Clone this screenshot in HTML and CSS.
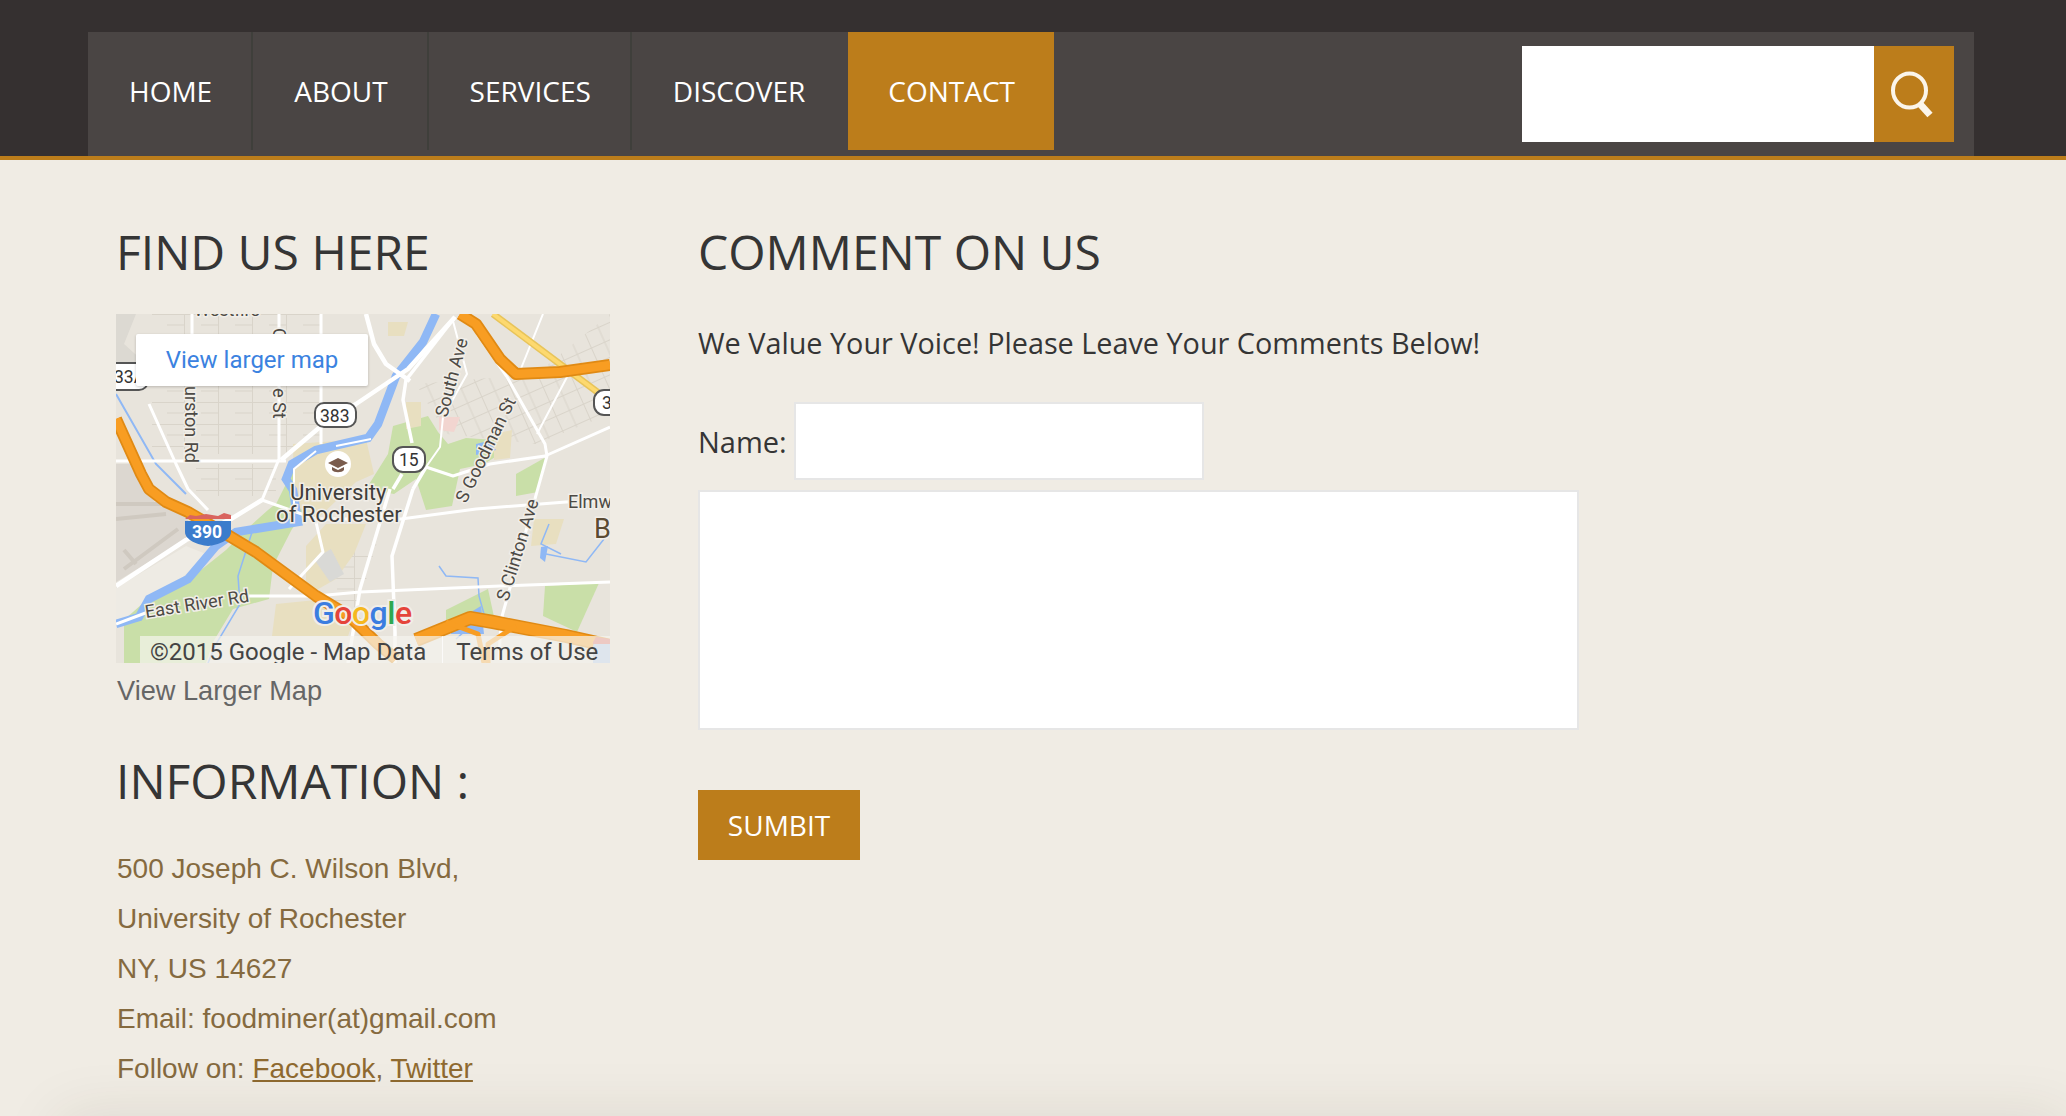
FILE: index.html
```html
<!DOCTYPE html>
<html>
	<head>
		<meta charset="utf-8">
		<title>Contact</title>
		<link rel="stylesheet" href="styles.css">
	</head>
	<body>
		<header id="header">
			<div id="menuBar">
				<nav id="menu">
					<a href="#">HOME</a>
					<a href="#">ABOUT</a>
					<a href="#">SERVICES</a>
					<a href="#">DISCOVER</a>
					<a href="#" class="active">CONTACT</a>
				</nav>
				<form id="search">
					<input type="text" name="q">
					<button type="button" aria-label="Search">
						<svg width="80" height="96" viewBox="0 0 80 96">
							<ellipse cx="35.5" cy="44.5" rx="16.5" ry="17" fill="none" stroke="#fbf5ea" stroke-width="4"/>
							<path d="M46 58 L56 69" stroke="#fbf5ea" stroke-width="7" fill="none"/>
						</svg>
					</button>
				</form>
			</div>
		</header>

		<main id="content">
			<section id="leftCol">
				<h2>FIND US HERE</h2>
				<div id="map">
					<svg width="494" height="349" viewBox="0 0 494 349">
						<defs>
							<pattern id="blocks" width="34" height="22" patternUnits="userSpaceOnUse">
								<path d="M0 .5H34M.5 0V22M17 11H34" stroke="#d9d4ca" stroke-width="1" fill="none"/>
							</pattern>
							<pattern id="blocksTilt" width="30" height="16" patternUnits="userSpaceOnUse" patternTransform="rotate(-24)">
								<path d="M0 .5H30M.5 0V16M15 0V16" stroke="#d9d4ca" stroke-width="1" fill="none"/>
							</pattern>
						</defs>
						<rect width="494" height="349" fill="#e8e4dc"/>

						<!-- blocks -->
						<rect x="36" y="0" width="170" height="140" fill="url(#blocks)"/>
						<rect x="80" y="150" width="80" height="32" fill="url(#blocks)"/>
						<path d="M300 70L420 60L494 0V100L420 130L330 120Z" fill="url(#blocksTilt)"/>
						<path d="M212 225H262L240 300H212Z" fill="url(#blocks)"/>

						<!-- airport -->
						<path d="M0 150H14L40 190L72 204V224L0 268Z" fill="#dcd7d0"/>
						<path d="M0 190H58M0 205L50 200M8 255L62 215M20 250L8 236" stroke="#cfc9c0" stroke-width="4" fill="none"/>
						<path d="M0 274L70 232L90 240L60 270L0 310Z" fill="#eeebe4"/>
						<path d="M0 0L20 0L8 30L28 48L0 52Z" fill="#dcd9d2"/>

						<!-- parks -->
						<path d="M8 349V306L35 282L70 268L110 236L132 214L152 196L182 172L192 196L176 215L157 252L153 285L117 295L97 328L90 349Z" fill="#c9dfa8"/>
						<path d="M180 150L190 170L170 205L150 210L165 180Z" fill="#c9dfa8"/>
						<path d="M277 112L312 102L322 118L332 130L350 124L378 126L384 140L368 150L344 155L336 192L310 196L300 165L278 180L250 175L272 140Z" fill="#c9dfa8"/>
						<path d="M400 160L432 142L422 178L400 182Z" fill="#c9dfa8"/>
						<path d="M429 272L483 269L461 318L427 302Z" fill="#c9dfa8"/>
						<path d="M330 296L372 275L380 312L330 316Z" fill="#c9dfa8"/>

						<!-- campus -->
						<path d="M177 130L250 125L258 160L240 168L200 206L178 190Z" fill="#e8dfc0"/>
						<path d="M190 232L210 210L250 210L238 240L220 265L190 282Z" fill="#e8dfc0"/>
						<path d="M160 290L200 286L240 300L232 322H156Z" fill="#e8dfc0"/>
						<path d="M198 245L215 235L228 260L214 268Z" fill="#d9d9d6"/>
						<path d="M290 88H305V112L290 115Z" fill="#e8dfc0"/>
						<path d="M378 120L396 116L394 144L378 146Z" fill="#e8dfc0"/>
						<path d="M418 205L448 205L440 230L415 232Z" fill="#e8dfc0"/>
						<path d="M272 8H292L288 22H272Z" fill="#e8dfc0"/>
						<path d="M323 103L344 103L338 118L323 116Z" fill="#f2d5d0"/>

						<!-- water -->
						<path d="M320 0L307 28L280 62L262 110L252 124L200 136L176 150L170 165L177 176L182 208L120 218L100 232L72 265L33 285L23 303L0 310" fill="none" stroke="#8fb8f5" stroke-width="8.5"/>
						<path d="M0 80L40 150L70 180" fill="none" stroke="#8fb8f5" stroke-width="2"/>
						<path d="M137 215L122 262L124 290L100 330L92 349" fill="none" stroke="#8fb8f5" stroke-width="1.5"/>
						<path d="M323 252L330 262L362 264L363 282L368 300L340 325" fill="none" stroke="#8fb8f5" stroke-width="1.5"/>
						<path d="M430 240L470 248L488 225M433 210L425 230L445 240" fill="none" stroke="#8fb8f5" stroke-width="1.5"/>
						<path d="M335 310L365 292L368 320H335Z" fill="#8fb8f5"/>
						<path d="M360 130L372 127L380 136L360 141Z" fill="#8fb8f5"/>
						<path d="M425 233L432 232L429 248L424 244Z" fill="#8fb8f5"/>

						<!-- roads -->
						<g fill="none" stroke="#fff" stroke-linejoin="round">
							<path stroke-width="3" d="M76 0V20M205 0V130M163 0V145L146 186M33 90L60 150L72 175L92 196"/>
							<path stroke-width="3" d="M0 147H170M173 275L207 238L200 208M146 186L200 205H285L360 195L450 188L494 186"/>
							<path stroke-width="3" d="M133 282L200 282L244 278L384 272L494 268M0 310L40 295"/>
							<path stroke-width="4.5" d="M0 272L70 226L115 205L146 186M339 3L292 55L240 90L204 113L165 146M250 0L258 30L270 50L294 67"/>
							<path stroke-width="3.5" d="M339 3L290 66L287 86L296 129M297 175L276 242L279 318V349M274 175L244 275L232 349M310 153L297 175M286 160L277 175"/>
							<path stroke-width="3" d="M310 153L337 162L374 150L429 142L494 113M361 20L391 63L429 130L431 142L385 306L383 346"/>
							<path stroke-width="2" d="M427 0L404 57M451 63L421 120M337 7L351 60L327 103L324 133L310 153"/>
							<path stroke-width="2" d="M200 137L178 155L178 190M255 125L220 132"/>
						</g>

						<!-- highways -->
						<path d="M377 0L484 80" fill="none" stroke="#e8c45a" stroke-width="7"/>
						<path d="M377 0L484 80" fill="none" stroke="#fdd96f" stroke-width="4"/>
						<g fill="none" stroke-linejoin="round">
							<path d="M344 0L360 10L384 45L400 60L444 58L494 51" stroke="#e08a14" stroke-width="12"/>
							<path d="M344 0L360 10L384 45L400 60L444 58L494 51" stroke="#f89d22" stroke-width="8.5"/>
							<path d="M0 105L25 160L33 175L50 188L72 198L115 223L140 238L200 282L233 302L262 330L280 345" stroke="#e08a14" stroke-width="12"/>
							<path d="M0 105L25 160L33 175L50 188L72 198L115 223L140 238L200 282L233 302L262 330L280 345" stroke="#f89d22" stroke-width="8.5"/>
							<path d="M300 326L354 304L377 308L450 322L494 332" stroke="#e08a14" stroke-width="14"/>
							<path d="M300 326L354 304L377 308L450 322L494 332" stroke="#f89d22" stroke-width="11"/>
							<path d="M330 308L362 320L368 349M400 312L372 330L372 349" stroke="#f89d22" stroke-width="5"/>
						</g>

						<!-- road shields -->
						<rect x="-12" y="49" width="44" height="27" rx="9" class="shield"/>
						<rect x="199" y="89" width="41" height="24" rx="9" class="shield"/>
						<rect x="277" y="133" width="32" height="25" rx="10" class="shield"/>
						<rect x="478" y="76" width="30" height="25" rx="10" class="shield"/>
						<text x="-2" y="69" class="shieldText">33A</text>
						<text x="204" y="108" class="shieldText">383</text>
						<text x="283" y="152" class="shieldText">15</text>
						<text x="486" y="95" class="shieldText">3</text>

						<!-- interstate -->
						<path d="M69 205L74 201L80 202L90 200L102 202L108 199L115 201V205Z" fill="#d9645f"/>
						<path d="M69 207H115V218C115 226 102 231 92 232C82 231 69 226 69 218Z" fill="#3b7ccc"/>
						<text x="76" y="224" class="hwyText">390</text>
						<path d="M477 332L479 326L494 329V349H477Z" fill="#a7c4ea"/>
						<path d="M477 328L480 323L494 325V330H477Z" fill="#d9645f"/>

						<!-- street labels -->
						<text x="78" y="2" class="label">Westfire</text>
						<text transform="translate(157 14) rotate(90)" class="label">G</text>
						<text transform="translate(69 72) rotate(90)" class="label">urston Rd</text>
						<text transform="translate(157 74) rotate(90)" class="label">e St</text>
						<text transform="translate(331 104) rotate(-75)" class="label">South Ave</text>
						<text transform="translate(350 190) rotate(-64)" class="label">S Goodman St</text>
						<text transform="translate(392 288) rotate(-73)" class="label">S Clinton Ave</text>
						<text transform="translate(30 304) rotate(-9)" class="label">East River Rd</text>
						<text x="452" y="194" class="label">Elmw</text>
						<text x="478" y="224" class="labelBig">B</text>
						<text x="174" y="186" class="placeName">University</text>
						<text x="160" y="208" class="placeName">of Rochester</text>

						<!-- campus marker -->
						<circle cx="222" cy="150" r="13" fill="#fff"/>
						<path d="M222 144L232 149L222 154L212 149Z" fill="#7a5c4d"/>
						<path d="M216 153V156C218 159 226 159 228 156V153L222 156Z" fill="#7a5c4d"/>

						<text y="310" class="logo"><tspan x="197" fill="#3b7de0">G</tspan><tspan fill="#e5443a">o</tspan><tspan fill="#f5b81f">o</tspan><tspan fill="#3b7de0">g</tspan><tspan fill="#2fa84f">l</tspan><tspan fill="#e5443a">e</tspan></text>
					</svg>
					<a href="#" id="mapLink">View larger map</a>
					<div id="mapCredit">
						<span>©2015 Google - Map Data</span>
						<span class="terms">Terms of Use</span>
					</div>
				</div>
				<a href="#" id="largerLink">View Larger Map</a>

				<h2 id="infoTitle">INFORMATION :</h2>
				<ul id="info">
					<li>500 Joseph C. Wilson Blvd,</li>
					<li>University of Rochester</li>
					<li>NY, US 14627</li>
					<li>Email: foodminer(at)gmail.com</li>
					<li>Follow on: <a href="#">Facebook</a>, <a href="#">Twitter</a></li>
				</ul>
			</section>

			<section id="rightCol">
				<h2>COMMENT ON US</h2>
				<p id="intro">We Value Your Voice! Please Leave Your Comments Below!</p>
				<form id="comment">
					<div class="nameRow">
						<label for="name">Name:</label>
						<input type="text" id="name" name="name">
					</div>
					<textarea name="message"></textarea>
					<button type="button" id="submit">SUMBIT</button>
				</form>
			</section>
		</main>

		<footer id="footer"></footer>
	</body>
</html>
```

FILE: styles.css
```css
body {
	margin: 0;
	background: #f0ece4;
	display: flex;
	flex-direction: column;
	height: 1116px;
	overflow: hidden;
	font-family: "Open Sans", sans-serif;
	color: #353535;
}

#header {
	flex-shrink: 0;
	background: #353030;
	padding: 32px 92px 0 88px;
	border-bottom: 4px solid #bc7d1b;
}

#menuBar {
	display: flex;
	justify-content: space-between;
	height: 124px;
	background: #4a4544;
}

#menu {
	display: flex;
	height: 118px;
}

#menu a {
	display: flex;
	align-items: center;
	padding: 0 39px 0 41px;
	border-right: 2px solid #3f3f3b;
	color: #fff;
	font-size: 28px;
	text-decoration: none;
}

#menu a:nth-child(4) {
	border-right: 0;
	padding-right: 43px;
}

#menu a.active {
	background: #bc7d1b;
	border-right: 0;
	padding: 0 39px 0 40px;
}

#search {
	display: flex;
	margin: 14px 20px 0 0;
	height: 96px;
}

#search input {
	width: 352px;
	height: 96px;
	box-sizing: border-box;
	border: 0;
	background: #fff;
}

#search button {
	width: 80px;
	height: 96px;
	padding: 0;
	border: 0;
	background: #bc7d1b;
}

#search svg {
	display: block;
}

#content {
	flex: none;
	height: 956px;
	display: flex;
	gap: 88px;
	padding: 0 0 0 116px;
}

h2 {
	margin: 0;
	font-size: 48px;
	font-weight: 400;
	line-height: 62px;
	color: #353535;
}

#leftCol {
	width: 494px;
	padding-top: 61px;
}

#map {
	position: relative;
	width: 494px;
	height: 349px;
	margin-top: 31px;
	overflow: hidden;
}

#map svg {
	display: block;
}

.shield {
	fill: #fff;
	stroke: #555;
	stroke-width: 2;
}

.shieldText {
	font: 17.5px Roboto, sans-serif;
	fill: #333;
}

.hwyText {
	font: bold 17.5px Roboto, sans-serif;
	fill: #fff;
}

.label {
	font: 18px Roboto, sans-serif;
	fill: #4d4a45;
	stroke: #f1eee8;
	stroke-width: 3px;
	paint-order: stroke;
}

.labelBig {
	font: 27px Roboto, sans-serif;
	fill: #5a4a32;
	stroke: #f1eee8;
	stroke-width: 3px;
	paint-order: stroke;
}

.placeName {
	font: 22.2px Roboto, sans-serif;
	fill: #3f3d3a;
	stroke: #f1eee8;
	stroke-width: 3px;
	paint-order: stroke;
}

.logo {
	font: 500 32px Roboto, sans-serif;
	stroke: #f1eee8;
	stroke-width: 4px;
	paint-order: stroke;
	letter-spacing: -.5px;
}

#mapLink {
	position: absolute;
	left: 20px;
	top: 20px;
	width: 232px;
	height: 52px;
	box-sizing: border-box;
	padding-top: 12px;
	background: #fff;
	border-radius: 2px;
	box-shadow: 0 1px 3px rgba(0, 0, 0, 0.2);
	color: #3b82e0;
	font: 24px/28px Roboto, sans-serif;
	text-align: center;
	text-decoration: none;
}

#mapCredit {
	position: absolute;
	left: 24px;
	right: 0;
	bottom: 0;
	height: 27px;
	display: flex;
	gap: 16px;
	padding-left: 10px;
	background: rgba(245, 243, 238, 0.7);
	color: #444;
	font: 24px/33px Roboto, sans-serif;
	white-space: nowrap;
}

.terms {
	padding-left: 13px;
	border-left: 1px solid rgba(255, 255, 255, 0.7);
}

#largerLink {
	display: block;
	margin: 10px 0 0 1px;
	color: #666;
	font: 27.2px/36px "Liberation Sans", sans-serif;
	text-decoration: none;
}

#infoTitle {
	margin-top: 41px;
}

#info {
	list-style: none;
	margin: 32px 0 0 1px;
	padding: 0;
	color: #856a3f;
	font: 28px/50px "Liberation Sans", sans-serif;
	white-space: nowrap;
}

#info a {
	color: #8f6a30;
}

#rightCol {
	width: 882px;
	padding-top: 61px;
}

#intro {
	margin: 40px 0 0;
	font-size: 28.8px;
	line-height: 40px;
}

.nameRow {
	display: flex;
	align-items: center;
	gap: 7px;
	margin-top: 39px;
}

.nameRow label {
	font-size: 29px;
}

#name {
	width: 410px;
	height: 78px;
	box-sizing: border-box;
	border: 2px solid #e6e6e6;
	background: #fff;
}

#comment textarea {
	display: block;
	width: 881px;
	height: 240px;
	box-sizing: border-box;
	margin-top: 10px;
	border: 2px solid #e6e6e6;
	background: #fff;
	resize: none;
}

#submit {
	display: block;
	width: 162px;
	height: 70px;
	margin-top: 60px;
	padding: 0;
	border: 0;
	background: #bc7d1b;
	color: #fff;
	font: 28px "Open Sans", sans-serif;
}

#footer {
	flex-shrink: 0;
	height: 100px;
	margin-left: 60px;
	background: #e6e3dc;
	box-shadow: 0 0 60px rgba(60, 50, 30, 0.1);
}
```
